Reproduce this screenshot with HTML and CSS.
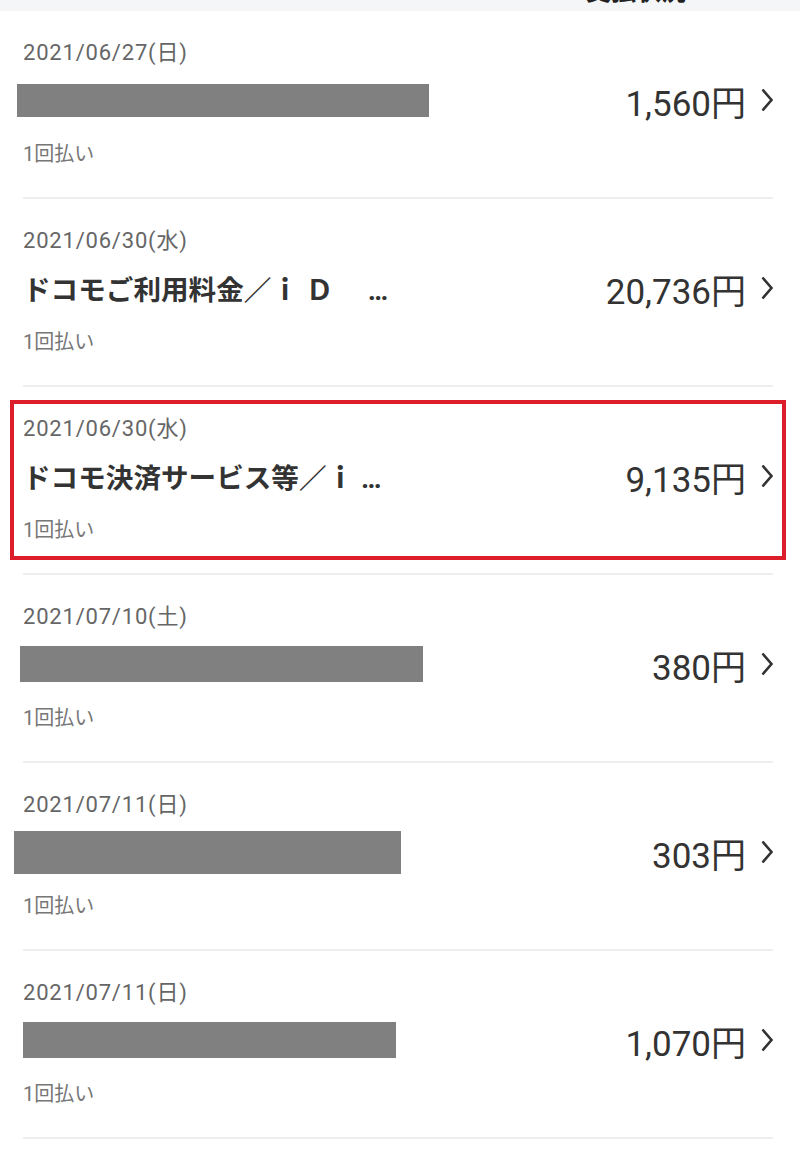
FILE: index.html
```html
<!DOCTYPE html>
<html lang="ja">
<head>
    <meta charset="UTF-8">
    <meta name="viewport" content="width=device-width, initial-scale=1.0">
    <title>ご利用明細</title>
    <link rel="stylesheet" href="styles.css">
</head>
<body>
    <div class="topbar">
        <span class="topbar-label">支払状況</span>
    </div>

    <div class="list">
        <div class="row">
            <div class="date">2021/06/27(日)</div>
            <div class="title"><span class="mask mask-1"></span></div>
            <div class="amount">1,560円</div>
            <svg class="chevron" viewBox="0 0 12 24"><path d="M1.5 1.5 L10.5 12 L1.5 22.5"/></svg>
            <div class="sub">1回払い</div>
        </div>

        <div class="row">
            <div class="date">2021/06/30(水)</div>
            <div class="title">ドコモご利用料金／ｉ Ｄ　 …</div>
            <div class="amount">20,736円</div>
            <svg class="chevron" viewBox="0 0 12 24"><path d="M1.5 1.5 L10.5 12 L1.5 22.5"/></svg>
            <div class="sub">1回払い</div>
        </div>

        <div class="row">
            <div class="date">2021/06/30(水)</div>
            <div class="title">ドコモ決済サービス等／ｉ …</div>
            <div class="amount">9,135円</div>
            <svg class="chevron" viewBox="0 0 12 24"><path d="M1.5 1.5 L10.5 12 L1.5 22.5"/></svg>
            <div class="sub">1回払い</div>
            <div class="highlight"></div>
        </div>

        <div class="row">
            <div class="date">2021/07/10(土)</div>
            <div class="title"><span class="mask mask-4"></span></div>
            <div class="amount">380円</div>
            <svg class="chevron" viewBox="0 0 12 24"><path d="M1.5 1.5 L10.5 12 L1.5 22.5"/></svg>
            <div class="sub">1回払い</div>
        </div>

        <div class="row">
            <div class="date">2021/07/11(日)</div>
            <div class="title"><span class="mask mask-5"></span></div>
            <div class="amount">303円</div>
            <svg class="chevron" viewBox="0 0 12 24"><path d="M1.5 1.5 L10.5 12 L1.5 22.5"/></svg>
            <div class="sub">1回払い</div>
        </div>

        <div class="row">
            <div class="date">2021/07/11(日)</div>
            <div class="title"><span class="mask mask-6"></span></div>
            <div class="amount">1,070円</div>
            <svg class="chevron" viewBox="0 0 12 24"><path d="M1.5 1.5 L10.5 12 L1.5 22.5"/></svg>
            <div class="sub">1回払い</div>
        </div>
    </div>
</body>
</html>
```

FILE: styles.css
```css
body {
    margin: 0;
    background: #ffffff;
    font-family: Roboto, "Noto Sans CJK JP", sans-serif;
    color: #333333;
}

.topbar {
    height: 11px;
    background: #f5f6f8;
    overflow: hidden;
    display: flex;
    justify-content: flex-end;
    padding-right: 114px;
}

.topbar-label {
    display: block;
    font-size: 25px;
    line-height: 25px;
    font-weight: bold;
    color: #222;
    margin-top: -21px;
}

.list {
    margin: 0 27px 0 23px;
}

.row {
    position: relative;
    display: grid;
    grid-template-columns: 1fr auto auto;
    grid-template-rows: 30px 70px 34px;
    column-gap: 15px;
    align-items: center;
    padding: 24px 0 28px;
    border-bottom: 2px solid #eeeeee;
}

.date {
    grid-column: 1 / 4;
    font-size: 22px;
    letter-spacing: 0.8px;
    color: #666666;
}

.title {
    grid-column: 1;
    font-size: 27.6px;
    font-weight: bold;
    color: #333333;
    white-space: nowrap;
    display: flex;
    align-items: center;
}

.amount {
    grid-column: 2;
    font-size: 35px;
    color: #333333;
}

.chevron {
    grid-column: 3;
    width: 12px;
    height: 24px;
    fill: none;
    stroke: #333333;
    stroke-width: 2.6;
}

.sub {
    grid-column: 1 / 4;
    font-size: 20px;
    color: #777777;
}

.mask {
    display: block;
    background: #808080;
}

.mask-1 { width: 412px; height: 33px; margin-left: -6px; }
.mask-4 { width: 403px; height: 36px; margin-left: -3px; }
.mask-5 { width: 387px; height: 43px; margin-left: -9px; }
.mask-6 { width: 373px; height: 36px; margin-left: 0; }

.highlight {
    position: absolute;
    top: 13px;
    left: -13px;
    right: -13px;
    height: 160px;
    box-sizing: border-box;
    border: 4px solid #dc1e2b;
}
```
